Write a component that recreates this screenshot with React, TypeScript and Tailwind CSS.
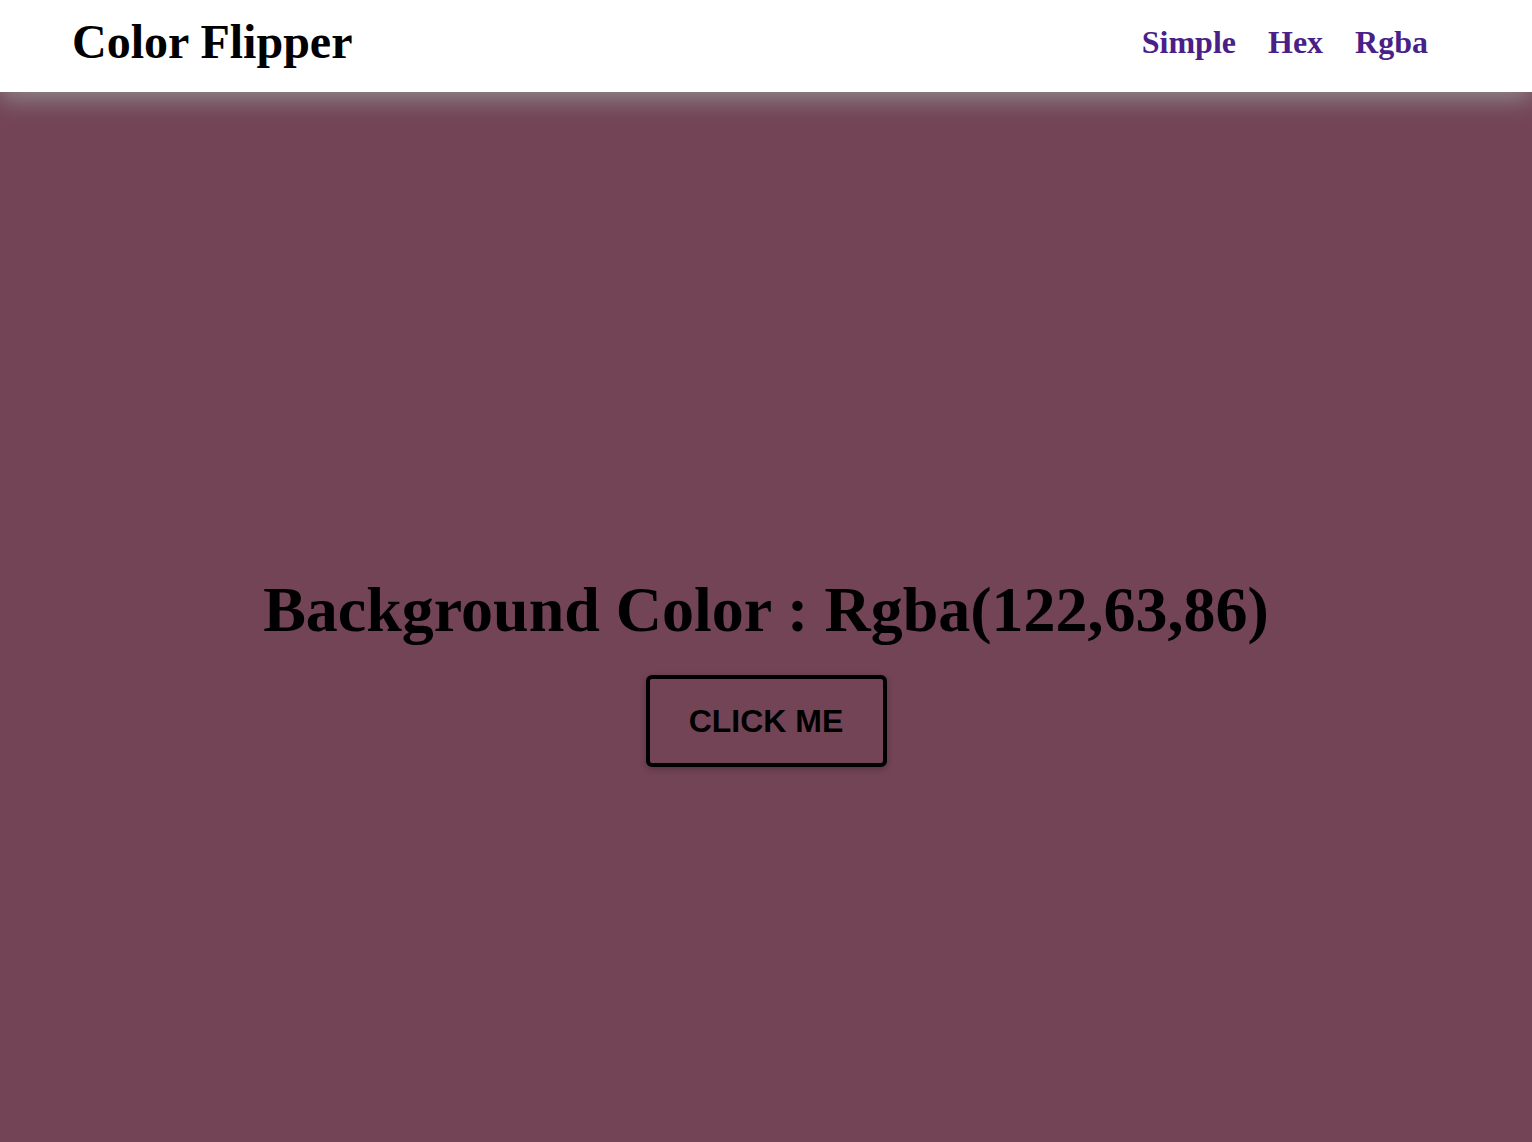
import { useState } from "react";

const serif = "font-['Liberation_Serif','Times_New_Roman',serif]";

export default function App() {
  const [color, setColor] = useState({ r: 122, g: 63, b: 86 });

  const flip = () => {
    setColor({
      r: Math.floor(Math.random() * 256),
      g: Math.floor(Math.random() * 256),
      b: Math.floor(Math.random() * 256),
    });
  };

  return (
    <div className={`min-h-screen bg-[#734456] ${serif}`}>
      <nav className="relative z-10 flex h-[92px] items-center justify-between bg-white pb-2 pl-[72px] pr-[104px] shadow-[0_6px_24px_rgba(150,150,150,0.9)]">
        <h1 className="text-[48px] font-bold leading-none text-black">
          Color Flipper
        </h1>
        <ul className="flex items-center gap-8 text-[32px] font-bold text-[#4b1f88]">
          <li>
            <a href="#">Simple</a>
          </li>
          <li>
            <a href="#">Hex</a>
          </li>
          <li>
            <a href="#">Rgba</a>
          </li>
        </ul>
      </nav>

      <main className="flex h-[1050px] flex-col items-center justify-center pt-[103px]">
        <h2 className="text-[64px] font-bold leading-tight text-black">
          Background Color : Rgba({color.r},{color.g},{color.b})
        </h2>
        <button
          onClick={flip}
          className="mt-[25px] h-[92px] w-[241px] rounded-md border-4 border-black font-['Liberation_Sans',Arial,sans-serif] text-[32px] font-bold uppercase text-black shadow-[0_2px_6px_rgba(0,0,0,0.25)]"
        >
          Click me
        </button>
      </main>
    </div>
  );
}
